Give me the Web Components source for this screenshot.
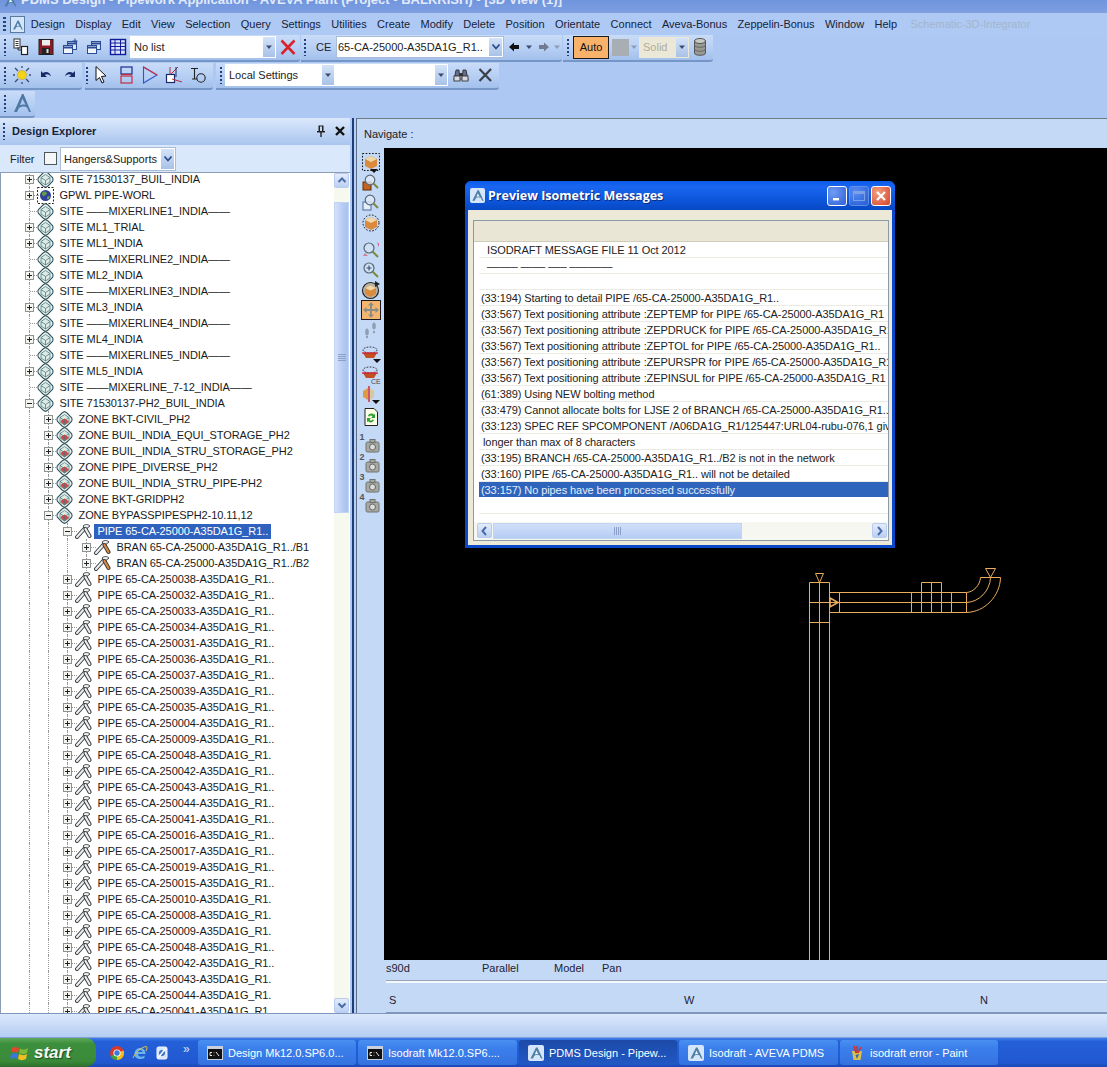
<!DOCTYPE html>
<html>
<head>
<meta charset="utf-8">
<title>PDMS Design</title>
<style>
html, body { margin: 0; padding: 0; background: #adc8f2; }
body { width: 1107px; height: 1067px; overflow: hidden; font: 11px "Liberation Sans", Arial, sans-serif; color: #111; }
</style>
</head>
<body>
<pdms-app>
  <title-bar slot="title">PDMS Design - Pipework Application - AVEVA Plant (Project - BALKRISH) - [3D View (1)]</title-bar>
  <menu-bar slot="menu"></menu-bar>
  <tool-rows slot="tools"></tool-rows>
  <design-explorer slot="left"></design-explorer>
  <view-pane slot="right">
    <preview-dialog slot="dialog"></preview-dialog>
  </view-pane>
  <task-bar slot="task"></task-bar>
</pdms-app>

<script>
const S = (w, h, body, extra = '') => `<svg xmlns="http://www.w3.org/2000/svg" width="${w}" height="${h}" viewBox="0 0 ${w} ${h}" ${extra}>${body}</svg>`;

const LOGO = `<path d="M8 2.5 L2.5 13.5 H5 L6.2 11 C8 9.5 10 9.5 11.5 10.5 L13 13.5 H14.5 L9.5 2.5Z" fill="#4f7fa6"/><path d="M8.3 5.5 L10.4 9.3 C9 8.8 7.8 9 6.9 9.6Z" fill="#eaf2fb"/>`;

const DIAMOND = inner => `<path d="M8.5 .5 L11 2 L15.5 6.5 Q16.5 8.5 15.5 10.5 L11 15 L8.5 16.5 L6 15 L1.5 10.5 Q.5 8.5 1.5 6.5 L6 2Z" fill="#e9f2f0" stroke="#34565c" stroke-width="1.1"/><path d="M8.5 3.5 L13 6.5 V11 L8.5 14 L4 11 V6.5Z" fill="#dcebe8" stroke="#4f7a80" stroke-width=".8"/>${inner}<path d="M4 6.5 L8.5 9.5 L13 6.5 M8.5 9.5 V14" fill="none" stroke="#4f7a80" stroke-width=".8"/>`;
const WRENCH = c => `<path d="M2 14 L11 4" stroke="#30363a" stroke-width="4" stroke-linecap="round"/><path d="M2 14 L11 4" stroke="#eceeee" stroke-width="2.2" stroke-linecap="round"/><path d="M8 3 C10 1 13 1 15 3 L12.5 5 L10.5 6Z" fill="#eceeee" stroke="#30363a" stroke-width=".9"/><path d="M10.5 6 L14.5 13" stroke="#30363a" stroke-width="4" stroke-linecap="round"/><path d="M10.5 6 L14.5 13" stroke="${c}" stroke-width="2.2" stroke-linecap="round"/>`;

const ICONS = {
  logo: S(16, 16, LOGO),
  site: S(17, 17, DIAMOND('')),
  zone: S(17, 17, DIAMOND('<path d="M8.5 7.5 L12.5 10 V11 L8.5 14 L5 11 V9.5Z" fill="#d8433f"/>')),
  world: S(17, 17, `<rect x=".5" y=".5" width="16" height="16" fill="#fff" stroke="#222" stroke-dasharray="2 1.5"/><circle cx="8.5" cy="8.5" r="5.5" fill="#2e3f9c"/><path d="M5.5 5 C7.5 4 9.5 4.5 10 6.5 C9.5 8.5 7.5 8 6.5 9.5 C5 8.5 4.3 6.5 5.5 5Z" fill="#5f9c48"/><path d="M10.5 9.5 L13 9 L11.5 12.5 L10 12Z" fill="#6fa858"/>`),
  pipe: S(17, 16, WRENCH('#eceeee')),
  bran: S(17, 16, WRENCH('#d98a3c')),
  listnew: S(20, 20, `<rect x="3" y="2" width="6" height="9" fill="#fff" stroke="#333"/><path d="M4.5 4.5h3M4.5 6.5h3M4.5 8.5h3" stroke="#333"/><path d="M7 10 L7 13 H10" fill="none" stroke="#333"/><rect x="10.5" y="9.5" width="6" height="8" fill="#fff" stroke="#222" stroke-width="1.2"/>`),
  save: S(18, 18, `<rect x="2" y="1.5" width="14" height="15" fill="#8c1a26" stroke="#222"/><rect x="5" y="2" width="8" height="5.5" fill="#eee"/><rect x="5" y="10" width="8" height="6" fill="#222"/><rect x="9.5" y="11" width="2" height="4" fill="#ddd"/>`),
  winplus: S(18, 18, `<rect x="6.5" y="3.5" width="9" height="8" fill="#dfe8f7" stroke="#2a4c96"/><rect x="2.5" y="7.5" width="9" height="8" fill="#f0f5fc" stroke="#2a4c96"/><path d="M2.5 9.5h9M6.5 5.5h9" stroke="#2a4c96" stroke-width="2"/><path d="M14 .5v5M11.5 3h5" stroke="#2a4c96"/>`),
  winminus: S(18, 18, `<rect x="6.5" y="3.5" width="9" height="8" fill="#dfe8f7" stroke="#2a4c96"/><rect x="2.5" y="7.5" width="9" height="8" fill="#f0f5fc" stroke="#2a4c96"/><path d="M2.5 9.5h9M6.5 5.5h9" stroke="#2a4c96" stroke-width="2"/>`),
  grid: S(18, 18, `<rect x="1.5" y="1.5" width="15" height="15" fill="#dce6fa" stroke="#101c9c" stroke-width="1.4"/><path d="M1.5 5h15M1.5 8.5h15M1.5 12h15M6 1.5v15M11.5 1.5v15" stroke="#101c9c"/>`),
  redx: S(18, 18, `<path d="M2.5 2.5 L15.5 16 M15.5 2.5 L2.5 16" stroke="#d8242a" stroke-width="2.6"/>`),
  back: S(12, 12, `<path d="M1 6 L6 1.5 V4 H11 V8 H6 V10.5Z" fill="#111"/>`),
  fwd: S(12, 12, `<path d="M11 6 L6 1.5 V4 H1 V8 H6 V10.5Z" fill="#6f7c90"/>`),
  tinydown: S(8, 8, `<path d="M1 2.5 H7 L4 6Z" fill="#3a4a70"/>`),
  tinygrey: S(8, 8, `<path d="M1 2.5 H7 L4 6Z" fill="#8c9bb8"/>`),
  cyl: S(14, 20, `<path d="M1.5 4 V16 C1.5 19 12.5 19 12.5 16 V4Z" fill="#9a9a94" stroke="#555"/><ellipse cx="7" cy="4" rx="5.5" ry="2.5" fill="#c9c9c4" stroke="#555"/><path d="M1.5 8 C1.5 11 12.5 11 12.5 8 M1.5 12 C1.5 15 12.5 15 12.5 12" fill="none" stroke="#666"/>`),
  sun: S(20, 20, `<circle cx="10" cy="10" r="4.5" fill="#f2d21a" stroke="#c6a020" stroke-width=".6"/><path d="M3 3 L6 6 M17 3 L14 6 M3 17 L6 14 M17 17 L14 14 M10 1 V3 M10 17 V19 M1 10 H3 M17 10 H19" stroke="#3a4a70" stroke-width="1.3"/>`),
  undo: S(16, 14, `<path d="M3 3 V9 H9 L6.8 7 C8.5 5.6 11 6 13 8.5 C12.5 5 8.5 2.5 5 5Z" fill="#1a2a66"/>`),
  redo: S(16, 14, `<path d="M13 3 V9 H7 L9.2 7 C7.5 5.6 5 6 3 8.5 C3.5 5 7.5 2.5 11 5Z" fill="#1a2a66"/>`),
  cursor: S(16, 20, `<path d="M3 1.5 V15.5 L6.5 12.5 L9 18 L11 17 L8.5 11.5 L13 11Z" fill="#fff" stroke="#111"/>`),
  rects: S(16, 20, `<rect x="3" y="2" width="11" height="7" fill="none" stroke="#1c2c8c" stroke-width="1.2"/><rect x="3" y="11" width="11" height="7" fill="none" stroke="#c03040" stroke-width="1.2"/><path d="M3 9.5 H14" stroke="#c03040"/>`),
  tri: S(18, 20, `<path d="M2.5 2 V18 L16 10Z" fill="none" stroke="#2f55c8" stroke-width="1.1"/><path d="M2.5 2 L16 10" stroke="#d03048" stroke-width="1.1"/>`),
  meas: S(18, 20, `<rect x="1.5" y="9.5" width="8" height="8" fill="#fff" stroke="#1a2a66" stroke-width="1.2"/><path d="M6 9 L13 2 M7 14 L17 17 M5 2 V9" stroke="#c02a3a"/><path d="M11 2 L11 12" stroke="#1a2a66"/>`),
  tool: S(18, 20, `<path d="M2 3.5 H9 M5.5 3.5 V14 M3 14 H8" stroke="#222" stroke-width="1.1"/><circle cx="12" cy="13" r="4.2" fill="none" stroke="#222" stroke-width="1.1"/>`),
  binoc: S(18, 16, `<path d="M2 13 L4 3 H7 L8 13Z M10 13 L11 3 H14 L16 13Z" fill="#65708a" stroke="#222" stroke-width=".8"/><rect x="2" y="9" width="6" height="5" fill="#d8d8e0" stroke="#222" stroke-width=".8"/><rect x="10" y="9" width="6" height="5" fill="#d8d8e0" stroke="#222" stroke-width=".8"/><rect x="7.5" y="6" width="3" height="3" fill="#333"/>`),
  blackx: S(16, 16, `<path d="M2.5 2 L14 14 M14 2 L2.5 14" stroke="#3a3f4a" stroke-width="2.2"/>`),
  bigA: S(20, 22, `<path d="M10 2 L2 20 H5 L7 16 C10 14 13 14 15 15.5 L17 20 H19 L11.5 2Z" fill="#4f79a3"/><path d="M10.4 6.5 L13.6 13 C11.4 12.3 9.6 12.6 8 13.5Z" fill="#adc8f2"/>`),
  boxsel: S(18, 20, `<rect x=".5" y=".5" width="17" height="17" fill="none" stroke="#111" stroke-dasharray="1.6 1.6"/><path d="M3 6 L9 3 L15 6 V13 L9 16 L3 13Z" fill="#d98a3c"/><path d="M3 6 L9 9 L15 6 L9 3Z" fill="#f0d7a8"/><path d="M8 16 H16 L12 20Z" fill="#111"/>`),
  boxround: S(18, 18, `<circle cx="9" cy="9" r="8" fill="none" stroke="#111" stroke-dasharray="1.6 1.6"/><path d="M3 6 L9 3 L15 6 V13 L9 16 L3 13Z" fill="#d98a3c"/><path d="M3 6 L9 9 L15 6 L9 3Z" fill="#f0d7a8"/>`),
  zoomrect: S(18, 18, `<rect x="1" y="8" width="8" height="8" fill="#c8601e" stroke="#5a3010"/><circle cx="8" cy="6" r="4.8" fill="#dfe8f5" fill-opacity=".8" stroke="#5a6878" stroke-width="1.2"/><path d="M11.5 9.5 L16 14" stroke="#7c8a3c" stroke-width="2"/>`),
  zoomblue: S(18, 18, `<rect x="1" y="8" width="8" height="8" fill="#e6eefa" stroke="#4a6898"/><circle cx="8" cy="6" r="4.8" fill="#dfe8f5" fill-opacity=".8" stroke="#5a6878" stroke-width="1.2"/><path d="M11.5 9.5 L16 14" stroke="#7c8a3c" stroke-width="2"/>`),
  zoomall: S(18, 18, `<path d="M15 1 L17 3 V6Z" fill="#d8407a"/><path d="M1 15 L3 12 L6 15Z" fill="#d08090"/><circle cx="7" cy="7" r="5" fill="#cfe0f2" stroke="#5a6878" stroke-width="1.2"/><path d="M10.5 10.5 L16 16" stroke="#7c8a3c" stroke-width="2"/>`),
  zoomin: S(18, 18, `<circle cx="7" cy="7" r="5" fill="#cfe0f2" stroke="#5a6878" stroke-width="1.2"/><path d="M4.5 7h5M7 4.5v5" stroke="#39506c" stroke-width="1.1"/><path d="M10.5 10.5 L16 16" stroke="#7c8a3c" stroke-width="2"/>`),
  orbit: S(20, 20, `<circle cx="9.5" cy="10.5" r="8" fill="#b8b4a8" stroke="#222" stroke-width="1.2"/><path d="M4 8 L9.5 5.5 L15 8 V14 L9.5 17 L4 14Z" fill="#d98a3c"/><path d="M4 8 L9.5 10.5 L15 8 L9.5 5.5Z" fill="#f0d7a8"/><path d="M14 1 L19 4 L14 7Z" fill="#222"/>`),
  pan: S(18, 18, `<path d="M9 1 L12 4.5 H10 V8 H13.5 V6 L17 9 L13.5 12 V10 H10 V13.5 H12 L9 17 L6 13.5 H8 V10 H4.5 V12 L1 9 L4.5 6 V8 H8 V4.5 H6Z" fill="#8a8e86"/>`),
  steps: S(16, 18, `<ellipse cx="4" cy="11" rx="1.8" ry="3.5" fill="#8fa0b0"/><ellipse cx="11" cy="5" rx="1.8" ry="3.5" fill="#8fa0b0"/><circle cx="4" cy="16" r="1.2" fill="#8fa0b0"/><circle cx="11" cy="11" r="1.2" fill="#8fa0b0"/>`),
  clipmenu: S(20, 18, `<ellipse cx="9" cy="4" rx="7" ry="3" fill="none" stroke="#222" stroke-dasharray="1.6 1.4"/><path d="M2 7 H16 L13 12 H5Z" fill="#c05020"/><path d="M1 7 H17" stroke="#d02030" stroke-width="1.3"/><path d="M12 13 H20 L16 17Z" fill="#111"/>`),
  clipce: S(20, 18, `<ellipse cx="9" cy="4" rx="7" ry="3" fill="none" stroke="#222" stroke-dasharray="1.6 1.4"/><path d="M2 7 H16 L13 12 H5Z" fill="#c05020"/><path d="M1 7 H17" stroke="#d02030" stroke-width="1.3"/><text x="10" y="18" font-family="Liberation Sans" font-size="7" fill="#445">CE</text>`),
  sect: S(20, 20, `<path d="M2 6 L7 3 V15 L2 12Z" fill="#e09a40"/><path d="M9 3 L13 6 V12 L9 15Z" fill="#d8c8a0"/><path d="M8 1 V17" stroke="#d02030" stroke-width="1.4"/><path d="M11 15 H19 L15 19Z" fill="#111"/>`),
  refresh: S(16, 20, `<path d="M2 1.5 H11 L14.5 5 V18.5 H2Z" fill="#fdfde8" stroke="#222"/><path d="M5 9 C6 6 10 6 11 8 L12 6.5 V11 H8 L9.5 9.5 C9 8 7 8 6.5 9.5Z M11 13 C10 16 6 16 5 14 L4 15.5 V11 H8 L6.5 12.5 C7 14 9 14 9.5 12.5Z" fill="#2ea030"/>`),
  cam: S(22, 20, `<rect x="6" y="8" width="13" height="10" rx="1.5" fill="#a6a8a4" stroke="#70726e"/><rect x="10" y="5.5" width="5" height="3" fill="#a6a8a4" stroke="#70726e"/><circle cx="12.5" cy="13" r="3" fill="#dcded8" stroke="#666"/>`),
  pin: S(10, 14, `<path d="M2.5 1.5 H7.5 V7 H9 V8.5 H5.7 V13 H4.3 V8.5 H1 V7 H2.5Z M4 2.5 V7 H6 V2.5Z" fill="#222"/>`),
  close: S(12, 12, `<path d="M2 2 L10 10 M10 2 L2 10" stroke="#111" stroke-width="2.4"/>`),
  chrome: S(16, 16, `<circle cx="8" cy="8" r="7" fill="#d8372a"/><path d="M8 8 L1.6 11 A7 7 0 0 0 8 15 Z" fill="#3fa040"/><path d="M8 8 L14.6 5.5 A7 7 0 0 1 8 15Z" fill="#f0c020"/><circle cx="8" cy="8" r="3.6" fill="#fff"/><circle cx="8" cy="8" r="2.7" fill="#3a78d8"/>`),
  ie: S(16, 16, `<path d="M8 3 C11.5 3 13.5 5.5 13.5 9 H6 C6 12 10 12.5 12.5 10.5 V13 C8 15.5 2.5 13.5 2.5 9 C2.5 5.5 5 3 8 3Z M6 7 H10.5 C10.5 4.5 6.3 4.5 6 7Z" fill="#6cb4ee"/><path d="M1 13 C3 8 9 2 14.5 1.5 C15.5 3 14.5 5 14 6" fill="none" stroke="#e8c040" stroke-width="1"/>`),
  ql: S(16, 16, `<rect x="3" y="2" width="10" height="12" rx="1.5" fill="#d6e6fa" stroke="#f2f6ff"/><circle cx="8" cy="8" r="3" fill="#3a70c8"/><path d="M4 13 L12 3" stroke="#fff" stroke-width="1.4"/>`),
  cmd: S(16, 14, `<rect x=".5" y=".5" width="15" height="13" fill="#111" stroke="#c8d0e0"/><rect x="1" y="1" width="14" height="2" fill="#c8d0e0"/><path d="M3 6.5 H5 M3 6.5 V9.5 H5 M7 6.5v.6M7 9v.6M9 6 L12 10" stroke="#fff" stroke-width=".9" fill="none"/>`),
  paint: S(16, 16, `<path d="M3 6 H13 L11.5 15 H4.5Z" fill="#d8c050"/><path d="M5 1 L7 8 M8 1 V8 M12 2 L9 8" stroke="#d03030" stroke-width="1.5"/><path d="M6.5 10 L10 9 L8 14Z" fill="#3060b0"/>`),
  flag: S(20, 18, `<path d="M2 4 C4 2.5 6 2.5 9 4 L8 9 C6 7.5 3.5 7.5 1 9Z" fill="#e0482a"/><path d="M10 4.5 C12 6 15 6 18 4 L17 9 C14.5 10.5 12 10.5 9 9Z" fill="#7cb93a"/><path d="M1 10 C3.5 8.5 6 8.5 8 10 L7 15 C5 13.5 2.5 13.5 0 15Z" fill="#3a78d8"/><path d="M9 10 C12 11.5 14.5 11.5 17 10 L16 15 C13 16.5 10.5 16.5 8 15Z" fill="#f0c020"/>`),
  min: S(12, 12, `<rect x="2" y="8" width="6" height="2.4" fill="#fff"/>`),
  max: S(14, 12, `<rect x="1.5" y="1.5" width="11" height="9" fill="none" stroke="#9fb8e8"/><path d="M1.5 3h11" stroke="#9fb8e8" stroke-width="2"/>`),
  xwhite: S(12, 12, `<path d="M2 2 L10 10 M10 2 L2 10" stroke="#fff" stroke-width="2.2"/>`)
};

function define(name, css, html) {
  customElements.define(name, class extends HTMLElement {
    constructor() {
      super();
      this.attachShadow({ mode: 'open' });
    }
    connectedCallback() {
      const markup = typeof html === 'function' ? html(this) : html;
      this.shadowRoot.innerHTML = `<style>${typeof css === 'function' ? css(this) : css}</style>${markup}`;
    }
  });
}

define('pdms-app', `
  :host { display: flex; flex-direction: column; width: 1107px; height: 1067px; overflow: hidden; }
  .main { flex: 1; display: flex; min-height: 0; }
  .split { width: 5px; flex: none; box-sizing: border-box; border-left: 2px solid #1d3c78; border-right: 1px solid #5e6e88; background: #b5cff5; }
`, `
  <slot name="title"></slot><slot name="menu"></slot><slot name="tools"></slot>
  <div class="main"><slot name="left"></slot><div class="split"></div><slot name="right"></slot></div>
  <slot name="task"></slot>
`);

define('title-bar', `
  :host { display: flex; height: 13px; flex: none; overflow: hidden; background: linear-gradient(#6f95de, #7f9fe0); color: #e2eafb; font: bold 13px "Liberation Sans", Arial, sans-serif; }
  .ic { margin: -7px 5px 0 2px; width: 14px; height: 14px; }
  .t { margin-top: -8px; line-height: 15px; white-space: nowrap; }
`, `<div class="ic">${ICONS.logo}</div><div class="t"><slot></slot></div>`);

const MENUS = ['Design','Display','Edit','View','Selection','Query','Settings','Utilities','Create','Modify','Delete','Position','Orientate','Connect','Aveva-Bonus','Zeppelin-Bonus','Window','Help'];
define('menu-bar', `
  :host { display: flex; align-items: center; height: 22px; flex: none; background: #aec9f3; color: #16233a; }
  .g { width: 3px; height: 14px; margin-left: 3px; background: repeating-linear-gradient(#2a4470 0 2px, transparent 2px 4px); }
  .lg { width: 15px; height: 17px; margin: 0 .5px 0 4px; box-sizing: border-box; border: 1px solid #587a9c; background: #d6e6fa; display: flex; overflow: hidden; }
  span { padding: 0 5.2px; white-space: nowrap; }
  .dis { color: #a4b5cc; margin-left: 3px; }
`, `<div class="g"></div><div class="lg">${ICONS.logo}</div>${MENUS.map(m => `<span>${m}</span>`).join('')}<span class="dis">Schematic-3D-Integrator</span>`);

define('tool-combo', h => `
  :host { display: flex; align-items: center; box-sizing: border-box; width: ${h.getAttribute('w')}px; height: ${h.getAttribute('h') || 22}px; flex: none; background: ${h.hasAttribute('off') ? '#ece8d8' : '#fff'}; ${h.hasAttribute('border') ? 'border: 1px solid #a9bcd8;' : ''} overflow: hidden; }
  .t { flex: 1; padding-left: ${h.getAttribute('pl') || 4}px; white-space: nowrap; overflow: hidden; color: ${h.hasAttribute('off') ? '#b0ac9c' : '#222'}; }
  .a { width: ${h.getAttribute('aw') || 12}px; flex: none; align-self: stretch; margin: 1px; display: flex; align-items: center; justify-content: center; background: linear-gradient(#d4e3f9, #a8c2e6); }
  svg { display: block; }
`, h => `<div class="t">${h.getAttribute('text') || ''}</div><div class="a">${h.hasAttribute('chev') ? S(10, 8, '<path d="M1.5 1.5 L5 5.5 L8.5 1.5" fill="none" stroke="#2a4a8c" stroke-width="1.8"/>') : ICONS.tinydown}</div>`);

define('tool-icon', h => `
  :host { display: flex; align-items: center; justify-content: center; width: ${h.getAttribute('w') || 24}px; height: 100%; flex: none; }
`, h => ICONS[h.getAttribute('name')]);

define('tool-grip', h => `
  :host { display: flex; align-items: center; justify-content: center; width: ${h.getAttribute('w') || 8}px; height: 100%; flex: none; }
  div { width: 2px; height: 17px; background: repeating-linear-gradient(#24407c 0 2px, transparent 2px 4px); }
`, '<div></div>');

define('tool-strip', h => `
  :host { display: flex; align-items: center; height: 27px; padding-bottom: 1px; box-sizing: border-box; flex: none; width: ${h.getAttribute('w')}px; margin-right: ${h.getAttribute('gap') || 0}px; background: linear-gradient(#c9dcf8, #b3cdf3 60%, #a3c0ec); border-bottom: 2px solid #7696c8; border-radius: 0 0 3px 0; }
`, '<slot></slot>');

define('tool-row', h => `
  :host { display: flex; height: ${h.getAttribute('h') || 28}px; flex: none; }
`, '<slot></slot>');

define('auto-button', `
  :host { display: flex; align-items: center; justify-content: center; box-sizing: border-box; width: 36px; height: 23px; flex: none; background: #f8b26a; border: 1px solid #1a1a20; margin-left: 1px; }
`, '<slot></slot>');

define('tool-rows', `:host { display: block; flex: none; height: 83px; background: #adc8f2; } `, () => `
  <tool-row>
    <tool-strip w="300" gap="1">
      <tool-grip w="9"></tool-grip>
      <tool-icon name="listnew" w="24"></tool-icon><tool-icon name="save" w="25"></tool-icon><tool-icon name="winplus" w="24"></tool-icon><tool-icon name="winminus" w="23"></tool-icon><tool-icon name="grid" w="25"></tool-icon>
      <tool-combo w="146" text="No list" pl="4"></tool-combo>
      <tool-icon name="redx" w="24"></tool-icon>
    </tool-strip>
    <tool-strip w="261" gap="1">
      <tool-grip w="8"></tool-grip><span style="width:27px;padding-left:7px;box-sizing:border-box;flex:none;color:#223">CE</span>
      <tool-combo w="168" text="65-CA-25000-A35DA1G_R1.." chev border pl="1" aw="13"></tool-combo>
      <tool-icon name="back" w="20"></tool-icon><tool-icon name="tinydown" w="10"></tool-icon><tool-icon name="fwd" w="19"></tool-icon><tool-icon name="tinygrey" w="8"></tool-icon>
    </tool-strip>
    <tool-strip w="150">
      <tool-grip w="9"></tool-grip>
      <auto-button>Auto</auto-button>
      <div style="width:17px;height:17px;background:#a9aeb4;margin-left:3px;flex:none"></div>
      <tool-icon name="tinygrey" w="10"></tool-icon>
      <tool-combo w="50" h="21" text="Solid" off pl="4"></tool-combo>
      <tool-icon name="cyl" w="21"></tool-icon>
    </tool-strip>
  </tool-row>
  <tool-row>
    <tool-strip w="82" gap="3">
      <tool-grip w="9"></tool-grip><tool-icon name="sun" w="25"></tool-icon><tool-icon name="undo" w="24"></tool-icon><tool-icon name="redo" w="24"></tool-icon>
    </tool-strip>
    <tool-strip w="128" gap="3">
      <tool-grip w="4"></tool-grip><tool-icon name="cursor" w="24"></tool-icon><tool-icon name="rects" w="25"></tool-icon><tool-icon name="tri" w="24"></tool-icon><tool-icon name="meas" w="24"></tool-icon><tool-icon name="tool" w="24"></tool-icon>
    </tool-strip>
    <tool-strip w="283">
      <tool-grip w="9"></tool-grip>
      <tool-combo w="110" text="Local Settings" pl="4"></tool-combo>
      <tool-combo w="113"></tool-combo>
      <tool-icon name="binoc" w="25"></tool-icon><tool-icon name="blackx" w="24"></tool-icon>
    </tool-strip>
  </tool-row>
  <tool-row h="27">
    <tool-strip w="35"><tool-grip w="9"></tool-grip><tool-icon name="bigA" w="26"></tool-icon></tool-strip>
  </tool-row>
`);

const PIPES = ['38','32','33','34','31','36','37','39','35','04','09','48','42','43','44','41','16','17','19','15','10','08','09','48','42','43','44','41'];
const TREE = [
  [0,'+','site','SITE 71530137_BUIL_INDIA'],[0,'+','world','GPWL PIPE-WORL'],[0,'','site','SITE ——MIXERLINE1_INDIA——'],
  [0,'+','site','SITE ML1_TRIAL'],[0,'+','site','SITE ML1_INDIA'],[0,'','site','SITE ——MIXERLINE2_INDIA——'],
  [0,'+','site','SITE ML2_INDIA'],[0,'','site','SITE ——MIXERLINE3_INDIA——'],[0,'+','site','SITE ML3_INDIA'],
  [0,'','site','SITE ——MIXERLINE4_INDIA——'],[0,'+','site','SITE ML4_INDIA'],[0,'','site','SITE ——MIXERLINE5_INDIA——'],
  [0,'+','site','SITE ML5_INDIA'],[0,'','site','SITE ——MIXERLINE_7-12_INDIA——'],[0,'-','site','SITE 71530137-PH2_BUIL_INDIA'],
  [1,'+','zone','ZONE BKT-CIVIL_PH2'],[1,'+','zone','ZONE BUIL_INDIA_EQUI_STORAGE_PH2'],[1,'+','zone','ZONE BUIL_INDIA_STRU_STORAGE_PH2'],
  [1,'+','zone','ZONE PIPE_DIVERSE_PH2'],[1,'+','zone','ZONE BUIL_INDIA_STRU_PIPE-PH2'],[1,'+','zone','ZONE BKT-GRIDPH2'],
  [1,'-','zone','ZONE BYPASSPIPESPH2-10.11,12'],[2,'-','pipe','PIPE 65-CA-25000-A35DA1G_R1..',1],
  [3,'+','bran','BRAN 65-CA-25000-A35DA1G_R1../B1'],[3,'+','bran','BRAN 65-CA-25000-A35DA1G_R1../B2']
].concat(PIPES.map((n, i) => [2,'+','pipe',`PIPE 65-CA-2500${n}-A35DA1G_R1${(i >= 20 && i !== 23 && i !== 24) || i === 11 ? '.' : '..'}`]));

define('tree-row', `
  :host { display: flex; align-items: center; height: 16px; flex: none; white-space: nowrap; color: #1a1a1a; letter-spacing: -.08px; padding-left: 19.5px; }
  .g { width: 19px; height: 16px; flex: none; position: relative; }
  .g::before { content: ''; position: absolute; left: 9px; top: 0; bottom: 0; border-left: 1px dotted #9a9a9a; }
  .e { width: 19px; height: 16px; flex: none; position: relative; display: flex; align-items: center; justify-content: center; }
  .e::before { content: ''; position: absolute; left: 9px; top: 0; bottom: 0; border-left: 1px dotted #9a9a9a; }
  .e::after { content: ''; position: absolute; left: 10px; right: 0; top: 8px; border-top: 1px dotted #9a9a9a; }
  .b { position: relative; z-index: 1; width: 9px; height: 9px; box-sizing: border-box; border: 1px solid #8d9295; background: #f4f4f0; display: block; }
  .i { width: 17px; height: 16px; flex: none; margin-left: -1.5px; }
  .i svg { display: block; margin-top: -.5px; }
  .t { margin-left: 3.5px; padding: 0 2px; line-height: 15px; }
  :host([sel]) .t { background: #2f62bf; color: #fff; margin-left: 1.5px; padding: 0 3px 0 4px; }
`, h => {
  const level = +h.getAttribute('level');
  const exp = h.getAttribute('exp');
  const box = exp ? `<span class="b">${S(7, 7, `<path d="M1 3.5h5${exp === '+' ? 'M3.5 1v5' : ''}" stroke="#222"/>`, 'style="display:block"')}</span>` : '';
  return `${'<span class="g"></span>'.repeat(level)}<span class="e">${box}</span><span class="i">${ICONS[h.getAttribute('icon')]}</span><span class="t"><slot></slot></span>`;
});

define('scroll-arrow', `
  :host { display: flex; align-items: center; justify-content: center; width: 15px; height: 15px; flex: none; box-sizing: border-box; background: linear-gradient(#e3ecfb, #bcd0f3); border: 1px solid #b9cbee; border-radius: 2px; }
`, h => {
  const d = { up: 'M1.5 6 L5 2.5 L8.5 6', down: 'M1.5 2.5 L5 6 L8.5 2.5', left: 'M6 1 L2.5 5 L6 9', right: 'M3 1 L6.5 5 L3 9' }[h.getAttribute('dir')];
  return S(10, 10, `<path d="${d}" fill="none" stroke="#4a6ca8" stroke-width="2"/>`);
});

define('design-explorer', `
  :host { display: flex; flex-direction: column; width: 350px; flex: none; min-height: 0; background: #d4e4fa; border-right: 2px solid #aec9f3; }
  .head { display: flex; align-items: center; height: 27px; padding-bottom: 1px; box-sizing: border-box; flex: none; background: linear-gradient(#dbe8fb, #a9c5ee); }
  .head b { margin-left: 4px; font: bold 11px "Liberation Sans", Arial, sans-serif; color: #16233a; flex: 1; }
  .filter { display: flex; align-items: center; height: 27px; flex: none; background: #dae8fb; }
  .filter .l { margin-left: 10px; width: 34px; color: #222; }
  .ck { width: 13px; height: 13px; box-sizing: border-box; border: 1px solid #50585f; background: #f4f6f8; flex: none; margin-right: 3px; }
  .tree { flex: 1; min-height: 0; display: flex; background: #fff; border: 1px solid #8b9cb5; border-bottom: 0; border-right: 0; overflow: hidden; }
  .rows { flex: 1; min-width: 0; overflow: hidden; display: flex; flex-direction: column; margin-top: -2px; margin-left: -1px; }
  .bar { width: 15px; flex: none; display: flex; flex-direction: column; background: #f6f9ee; margin-right: 1px; }
  .thumb { height: 311px; margin-top: 14px; background: linear-gradient(90deg, #d4e2fa, #b5cbf4 60%, #a9c2ef); border: 1px solid #c3d4f2; box-sizing: border-box; display: flex; align-items: center; justify-content: center; }
  .sp { flex: 1; }
`, () => `
  <div class="head"><tool-grip w="8"></tool-grip><b>Design Explorer</b><tool-icon name="pin" w="18"></tool-icon><tool-icon name="close" w="20"></tool-icon></div>
  <div class="filter"><span class="l">Filter</span><span class="ck"></span><tool-combo w="116" h="24" border text="Hangers&amp;Supports" chev pl="3" aw="13"></tool-combo></div>
  <div class="tree">
    <div class="rows">${TREE.map(r => `<tree-row level="${r[0]}" exp="${r[1]}" icon="${r[2]}"${r[4] ? ' sel' : ''}>${r[3]}</tree-row>`).join('')}</div>
    <div class="bar">
      <scroll-arrow dir="up"></scroll-arrow>
      <div class="thumb">${S(8, 7, '<path d="M0 .5h8M0 2.5h8M0 4.5h8M0 6.5h8" stroke="#8aa0c8"/>')}</div>
      <div class="sp"></div>
      <scroll-arrow dir="down"></scroll-arrow>
    </div>
  </div>
`);

const SIDE = [['boxsel',5],['zoomrect',0],['zoomblue',0],['boxround',0],['zoomall',7],['zoomin',0],['orbit',0],['pan',0],['steps',0],['clipmenu',5],['clipce',0],['sect',0],['refresh',2]];
const CAMS = ['1','2','3','4'];

define('cam-icon', `
  :host { display: block; position: relative; width: 22px; height: 20px; flex: none; }
  b { position: absolute; left: 0; top: -2px; font: bold 9px "Liberation Sans", Arial, sans-serif; color: #555; }
`, h => `${ICONS.cam}<b>${h.getAttribute('n')}</b>`);

define('view-pane', `
  :host { display: flex; flex-direction: column; flex: 1; min-width: 0; background: #c4d9f6; border-top: 1px solid #6d7d84; }
  .nav { height: 29px; flex: none; display: flex; align-items: center; padding-left: 7px; color: #222; }
  .mid { flex: 1; min-height: 0; display: flex; }
  .side { width: 27px; flex: none; display: flex; flex-direction: column; align-items: center; }
  .cell { width: 20px; height: 20px; flex: none; display: flex; align-items: center; justify-content: center; }
  .cell.on { background: #f6b56e; box-sizing: border-box; border: 1px solid #1a1a20; }
  .view { flex: 1; background: #000; position: relative; overflow: hidden; }
  .view svg { position: absolute; left: 0; top: 0; }
  .s1 { height: 21px; flex: none; margin-left: 29px; padding-bottom: 5px; display: flex; align-items: center; color: #223; border-bottom: 1px solid #99a6b8; box-sizing: border-box; }
  .s1 span { width: 72px; }
  .s2 { height: 32px; flex: none; margin-left: 29px; padding-top: 4px; border-top: 2px solid #f3f7fe; border-bottom: 1px solid #7f97bc; display: flex; align-items: center; box-sizing: border-box; color: #223; }
  .s2 span:nth-child(1) { margin-left: 3px; width: 295px; }
  .s2 span:nth-child(2) { width: 296px; }
`, () => {
  const c = '#e9ad5c';
  const ox = 384, oy = 148;
  const L = (x1, y1, x2, y2) => `M${x1 - ox + .5} ${y1 - oy + .5}L${x2 - ox + .5} ${y2 - oy + .5}`;
  const lines = [
    L(809,582,809,960), L(819,582,819,960), L(829,582,829,960),
    L(809,582,829,582), L(809,602,966,602), L(809,622,829,622),
    L(829,592,966,592), L(829,612,966,612),
    L(839,592,839,612), L(911,592,911,612), L(921,582,921,612), L(931,582,931,612), L(941,582,941,612), L(951,592,951,612), L(966,592,966,612),
    L(921,582,941,582), L(980,577,1000,577),
    L(815,573,823,573), L(815,573,819,582), L(823,573,819,582),
    L(985,568,995,568), L(985,568,990,577), L(995,568,990,577)
  ].join('');
  const arcs = [[592,980],[602,990],[612,1000]].map(([y, x]) => `M${966 - ox + .5} ${y - oy + .5}C${966 - ox + (x - 966) * .55} ${y - oy} ${x - ox} ${y - oy - (y - 577) * .45} ${x - ox + .5} ${577 - oy + .5}`).join('');
  const side = SIDE.map(([n, m]) => `<div class="cell${n === 'pan' ? ' on' : ''}" style="margin-top:${m}px">${ICONS[n]}</div>`).join('');
  return `
    <div class="nav">Navigate :</div>
    <div class="mid">
      <div class="side">${side}<div style="height:7px;flex:none"></div>${CAMS.map(n => `<cam-icon n="${n}"></cam-icon>`).join('')}</div>
      <div class="view">
        ${S(723, 812, `<path d="${lines}${arcs}" fill="none" stroke="${c}"/><path d="M${830 - ox} ${598 - oy} L${838 - ox} ${602.5 - oy} L${830 - ox} ${607 - oy}Z" fill="none" stroke="${c}" stroke-width="1.6"/>`)}
        <slot name="dialog"></slot>
      </div>
    </div>
    <div class="s1"><span style="width:96px">s90d</span><span>Parallel</span><span style="width:48px">Model</span><span>Pan</span></div>
    <div class="s2"><span>S</span><span>W</span><span>N</span></div>
  `;
});

const MSGS = [
  ['ISODRAFT MESSAGE FILE 11  Oct 2012', 8], ['_____ ____ ___ _______', 8, 'u'], ['', 2],
  ['(33:194) Starting to detail PIPE /65-CA-25000-A35DA1G_R1..', 2],
  ['(33:567) Text positioning attribute :ZEPTEMP for PIPE /65-CA-25000-A35DA1G_R1', 2],
  ['(33:567) Text positioning attribute :ZEPDRUCK for PIPE /65-CA-25000-A35DA1G_R1..', 2],
  ['(33:567) Text positioning attribute :ZEPTOL for PIPE /65-CA-25000-A35DA1G_R1..', 2],
  ['(33:567) Text positioning attribute :ZEPURSPR for PIPE /65-CA-25000-A35DA1G_R1..', 2],
  ['(33:567) Text positioning attribute :ZEPINSUL for PIPE /65-CA-25000-A35DA1G_R1', 2],
  ['(61:389) Using NEW bolting method', 2],
  ['(33:479) Cannot allocate bolts for LJSE 2 of BRANCH /65-CA-25000-A35DA1G_R1..', 2],
  ['(33:123) SPEC REF SPCOMPONENT /A06DA1G_R1/125447:URL04-rubu-076,1 gives', 2],
  ['longer than max of 8 characters', 4],
  ['(33:195) BRANCH /65-CA-25000-A35DA1G_R1../B2 is not in the network', 2],
  ['(33:160) PIPE /65-CA-25000-A35DA1G_R1.. will not be detailed', 2],
  ['(33:157) No pipes have been processed successfully', 2, 'sel'],
  ['', 2]
];

define('preview-dialog', `
  :host { position: absolute; left: 81px; top: 33px; width: 430px; height: 367px; box-sizing: border-box; display: flex; flex-direction: column; background: #0a48c8; border-radius: 6px 6px 0 0; padding: 0 3px 3px; }
  .tb { height: 29px; flex: none; margin: 0 -3px; padding: 0 4px 0 5px; display: flex; align-items: center; border-radius: 6px 6px 0 0; background: linear-gradient(#0a5ae6, #1a66f0 20%, #0a52d6 75%, #0848c4); color: #fff; }
  .tb .lg { width: 15px; height: 15px; background: #d6e6fa; border-radius: 2px; flex: none; margin-right: 3px; }
  .tb .lg svg { display: block; width: 15px; height: 15px; }
  .tb b { flex: 1; font: bold 12.5px "Open Sans", "Liberation Sans", sans-serif; text-shadow: 1px 1px 0 #0a2a80; }
  .btn { width: 20px; height: 20px; flex: none; margin-left: 2px; box-sizing: border-box; border: 1px solid #fff; border-radius: 3px; display: flex; align-items: center; justify-content: center; background: radial-gradient(circle at 30% 30%, #6f9cf2, #2e5fd8); }
  .btn.off { opacity: .75; border-color: #7fa0e8; }
  .btn.x { background: radial-gradient(circle at 30% 30%, #f0a080, #d8432a); }
  .body { flex: 1; min-height: 0; background: #ece9d8; padding: 10px 3px 4px 5px; display: flex; }
  .panel { flex: 1; min-width: 0; border: 1px solid #8a9aa8; display: flex; flex-direction: column; background: #fff; }
  .hd { height: 20px; flex: none; background: #e9e6d6; border-bottom: 1px solid #cfccba; }
  .list { flex: 1; min-height: 0; overflow: hidden; padding-left: 5px; display: flex; flex-direction: column; }
  .r { height: 16px; flex: none; box-sizing: border-box; padding-top: 1px; border-bottom: 1px solid #ebebe4; white-space: nowrap; overflow: hidden; line-height: 14px; letter-spacing: -.08px; color: #222; }
  .r.sel { background: #2f64bc; color: #e6eefa; border-bottom-color: #fff; }
  .r.u { padding-top: 0; letter-spacing: 0; line-height: 9px; }
  .sb { height: 17px; flex: none; display: flex; align-items: center; padding: 0 1px 1px 3px; background: #f6f7f0; }
  .th { width: 249px; height: 16px; flex: none; margin-left: 1px; box-sizing: border-box; background: linear-gradient(#cfdff9, #b6cdf4); border: 1px solid #c3d4f2; display: flex; align-items: center; justify-content: center; }
  .sp { flex: 1; }
`, () => `
  <div class="tb"><span class="lg">${ICONS.logo}</span><b>Preview Isometric Messages</b>
    <span class="btn">${ICONS.min}</span><span class="btn off">${ICONS.max}</span><span class="btn x">${ICONS.xwhite}</span></div>
  <div class="body"><div class="panel">
    <div class="hd"></div>
    <div class="list">${MSGS.map(([t, p, k]) => `<div class="r ${k || ''}" style="padding-left:${p}px">${t || '&nbsp;'}</div>`).join('')}</div>
    <div class="sb"><scroll-arrow dir="left"></scroll-arrow><div class="th">${S(7, 8, '<path d="M.5 0v8M2.5 0v8M4.5 0v8M6.5 0v8" stroke="#8aa0c8"/>')}</div><div class="sp"></div><scroll-arrow dir="right"></scroll-arrow></div>
  </div></div>
`);

define('task-button', h => `
  :host { display: flex; align-items: center; box-sizing: border-box; width: ${h.getAttribute('w') || 158}px; height: 25px; flex: none; margin-right: 2px; padding-left: 9px; color: #fff; border-radius: 3px; white-space: nowrap; overflow: hidden;
    background: ${h.hasAttribute('on') ? 'linear-gradient(#1c4aa8, #2158c4)' : 'linear-gradient(#4a90f0, #3c80ec 30%, #3472e0)'}; }
  .i { width: 16px; height: 16px; flex: none; margin-right: 5px; display: flex; align-items: center; justify-content: center; }
  .lg { background: #d6e6fa; border-radius: 2px; }
`, h => `<span class="i ${h.getAttribute('icon') === 'logo' ? 'lg' : ''}">${ICONS[h.getAttribute('icon')]}</span><slot></slot>`);

define('task-bar', `
  :host { display: block; flex: none; }
  .status { height: 25px; box-sizing: border-box; background: linear-gradient(#dbe8fb, #b4cdf3); border-top: 1px solid #7f97bc; border-bottom: 1px solid #83a0d6; }
  .bar { height: 29px; display: flex; align-items: center; background: linear-gradient(#3f80ea, #2460d8 12%, #2158d2 85%, #1c48b4); }
  .start { width: 96px; height: 29px; flex: none; box-sizing: border-box; padding-left: 10px; display: flex; align-items: center; border-radius: 0 10px 10px 0; background: linear-gradient(#5ea95a, #3c8f3c 20%, #3a8a3a 80%, #2c6e2c); font: italic bold 17px "Liberation Sans", Arial, sans-serif; color: #f4f8f0; text-shadow: 1px 1px 1px #1d4a1d; }
  .start span { margin-left: 4px; }
  .ql { width: 102px; flex: none; display: flex; align-items: center; padding-left: 10px; box-sizing: border-box; }
  .ql tool-icon { height: 20px; }
  .more { color: #d4e2f8; font-size: 12px; margin-left: 10px; margin-top: -8px; }
`, () => `
  <div class="status"></div>
  <div class="bar">
    <div class="start">${ICONS.flag}<span>start</span></div>
    <div class="ql"><tool-icon name="chrome" w="22"></tool-icon><tool-icon name="ie" w="23"></tool-icon><tool-icon name="ql" w="22"></tool-icon><span class="more">»</span></div>
    <task-button icon="cmd" w="158">Design Mk12.0.SP6.0...</task-button>
    <task-button icon="cmd" w="159">Isodraft Mk12.0.SP6....</task-button>
    <task-button icon="logo" w="158" on>PDMS Design - Pipew...</task-button>
    <task-button icon="logo" w="159">Isodraft - AVEVA PDMS</task-button>
    <task-button icon="paint" w="158">isodraft error - Paint</task-button>
  </div>
`);
</script>
</body>
</html>
